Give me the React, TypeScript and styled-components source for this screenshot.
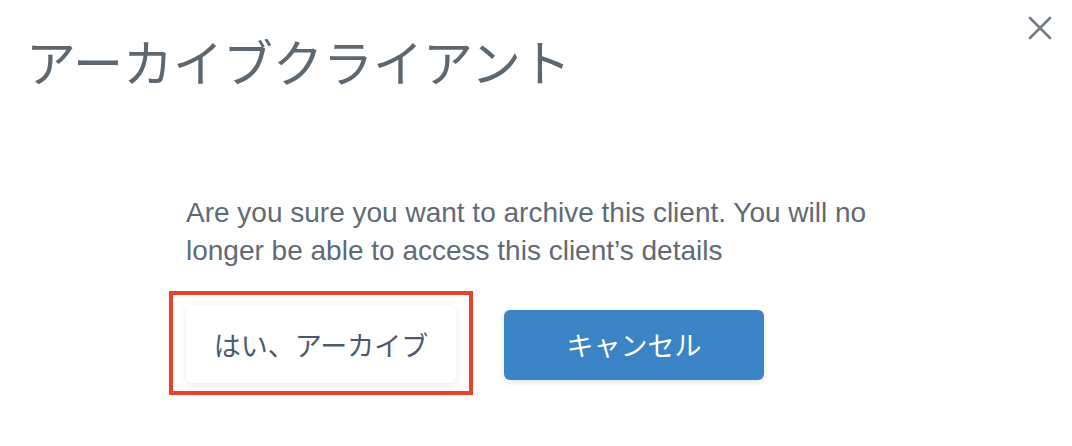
import styled, { createGlobalStyle } from 'styled-components'

const GlobalStyle = createGlobalStyle`
  html, body {
    margin: 0;
    padding: 0;
    background: #ffffff;
  }

  body {
    font-family: 'Liberation Sans', Arial, 'Noto Sans CJK JP', sans-serif;
  }
`

export default function App() {
  return (
    <>
      <GlobalStyle />
      <Modal>
        <Header>
          <Title>アーカイブクライアント</Title>
          <CloseButton aria-label='close'>
            <svg width={24} height={24} viewBox='0 0 24 24'>
              <path d='M2 2 L22 22 M22 2 L2 22' stroke='currentColor' strokeWidth={2.6} strokeLinecap='round' />
            </svg>
          </CloseButton>
        </Header>

        <Body>
          <Message>
            Are you sure you want to archive this client. You will no longer be able to access this client’s details
          </Message>
          <Actions>
            <Highlighted>
              <ConfirmButton>はい、アーカイブ</ConfirmButton>
            </Highlighted>
            <CancelButton>キャンセル</CancelButton>
          </Actions>
        </Body>
      </Modal>
    </>
  )
}

const Modal = styled.div`
  width: 1072px;
  height: 446px;
  box-sizing: border-box;
  background: #ffffff;
`

const Header = styled.header`
  display: flex;
  justify-content: space-between;
  align-items: flex-start;
  padding: 31px 20px 0 26px;
`

const Title = styled.h1`
  margin: 0;
  font-family: 'Noto Sans CJK JP', sans-serif;
  font-size: 50px;
  font-weight: 400;
  line-height: 58px;
  color: #5c6770;
`

const CloseButton = styled.button`
  display: flex;
  padding: 0;
  margin-top: -15px;
  border: none;
  background: none;
  color: #737c85;
  cursor: pointer;
`

const Body = styled.main`
  width: 700px;
  margin: 105px auto 0;
`

const Message = styled.p`
  margin: 0;
  font-family: 'Liberation Sans', Arial, sans-serif;
  font-size: 28px;
  line-height: 38px;
  color: #5f6a75;
`

const Actions = styled.div`
  display: flex;
  align-items: center;
  gap: 48px;
  margin-top: 36px;
`

// red annotation box drawn over the confirm button
const Highlighted = styled.div`
  position: relative;

  &::after {
    content: '';
    position: absolute;
    top: -15px;
    right: -17px;
    bottom: -12px;
    left: -17px;
    border: 4px solid #e8412c;
    pointer-events: none;
  }
`

const BaseButton = styled.button`
  display: flex;
  align-items: center;
  justify-content: center;
  border: none;
  border-radius: 6px;
  font-family: 'Noto Sans CJK JP', sans-serif;
  font-size: 27px;
  font-weight: 400;
  cursor: pointer;
`

const ConfirmButton = styled(BaseButton)`
  width: 270px;
  height: 77px;
  background: #ffffff;
  color: #4a5a6c;
  box-shadow: 0 2px 8px rgba(30, 40, 60, 0.1);
`

const CancelButton = styled(BaseButton)`
  width: 260px;
  height: 70px;
  background: #3a84c6;
  color: #ffffff;
  box-shadow: 0 2px 6px rgba(30, 40, 60, 0.12);
`
